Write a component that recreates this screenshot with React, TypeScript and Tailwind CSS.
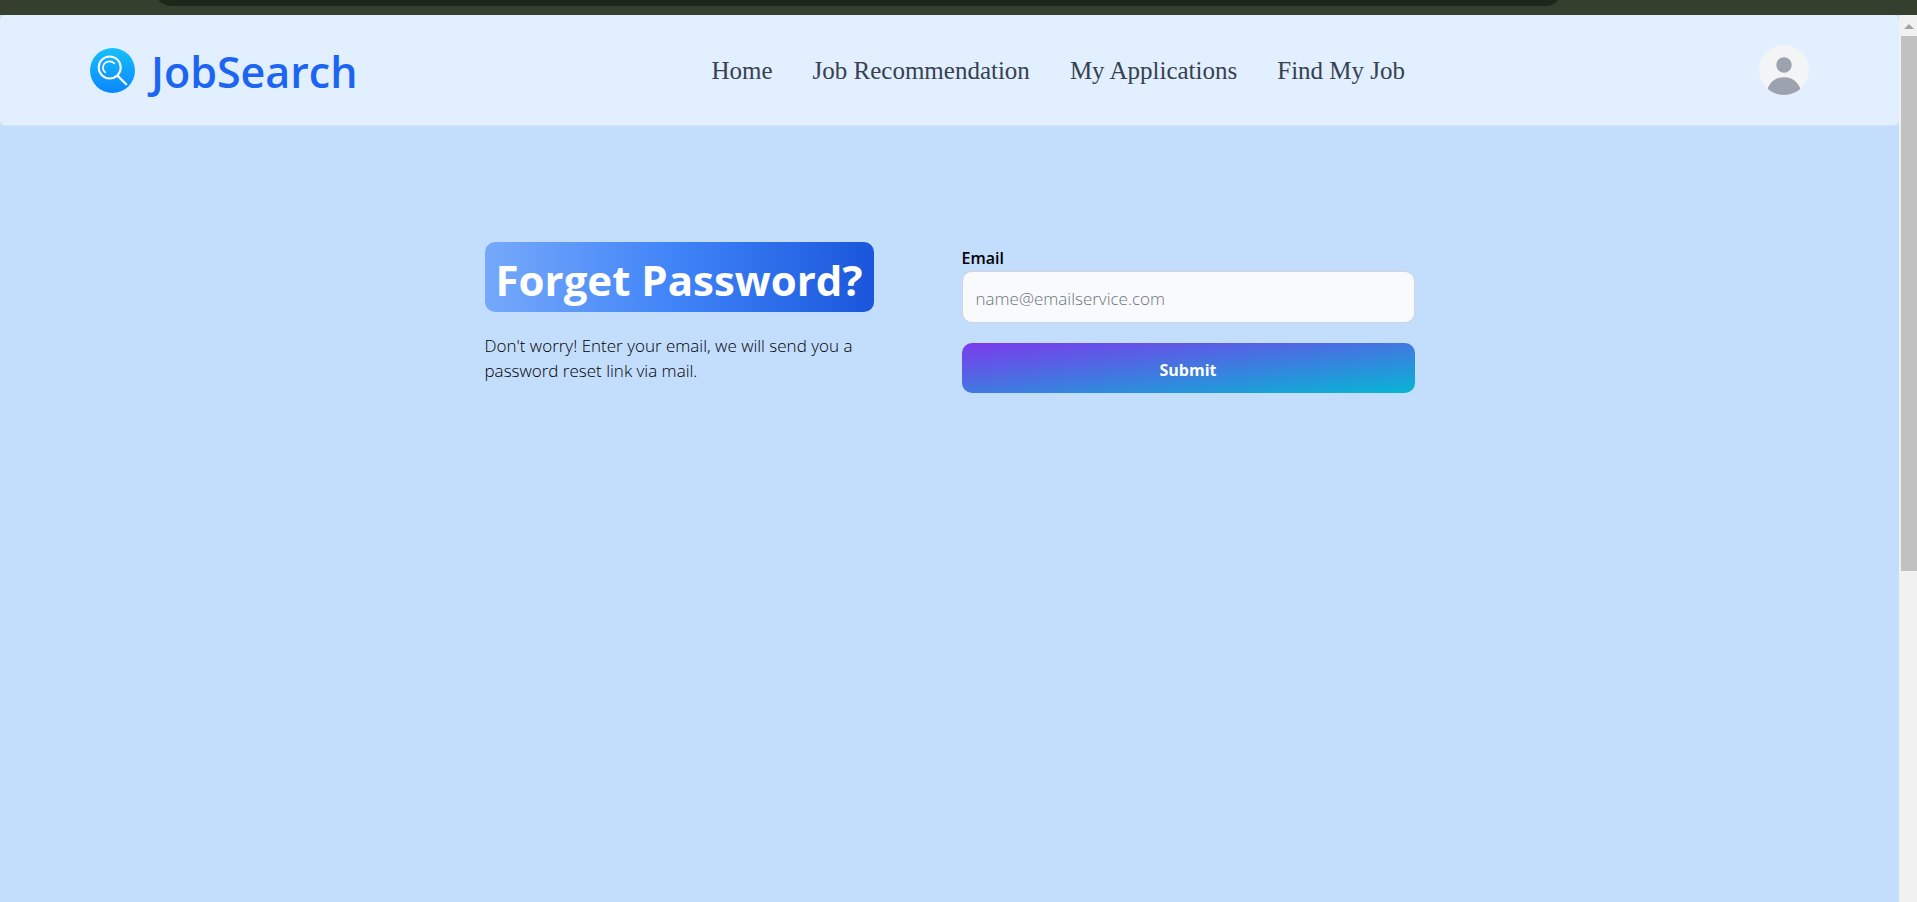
import { useId } from "react";

const links = ["Home", "Job Recommendation", "My Applications", "Find My Job"];

function Logo() {
  const id = useId();
  return (
    <svg viewBox="0 0 45 45" className="size-[45px] shrink-0" aria-hidden="true">
      <defs>
        <linearGradient id={id} x1="0" y1="0" x2="0" y2="1">
          <stop offset="0" stopColor="#16c0fb" />
          <stop offset="1" stopColor="#0a86ff" />
        </linearGradient>
      </defs>
      <circle cx="22.5" cy="22.5" r="22.5" fill={`url(#${id})`} />
      <g fill="none" stroke="#fff" strokeLinecap="round">
        <circle cx="19.7" cy="19.4" r="11" strokeWidth="2" />
        <path d="M27.7 27.9 L36.2 36.2" strokeWidth="2.2" />
        <path d="M24.3 15.4 C20.8 12 13.6 13.2 13 19.2 C12.8 21.6 13.6 23.2 15.3 24.4" strokeWidth="1.7" />
      </g>
    </svg>
  );
}

function Avatar() {
  const id = useId();
  return (
    <svg viewBox="0 0 50 50" className="size-[50px]" aria-hidden="true">
      <clipPath id={id}>
        <circle cx="25" cy="25" r="25" />
      </clipPath>
      <g clipPath={`url(#${id})`}>
        <rect width="50" height="50" fill="#f3f4f6" />
        <circle cx="25" cy="20" r="7.7" fill="#9ca3af" />
        <path d="M7.5 50 C8 39.5 15 32.2 25 32.2 C35 32.2 42 39.5 42.5 50 Z" fill="#9ca3af" />
      </g>
    </svg>
  );
}

export default function App() {
  return (
    <div className="flex h-screen flex-col overflow-hidden bg-[#c3ddfd] font-['Open_Sans','Noto_Sans',sans-serif] text-black">
      <div className="h-[15px] shrink-0 overflow-hidden bg-[#343f2d] pr-[355px] pl-[155px]">
        <div className="-mt-6 h-[30px] rounded-b-[16px] bg-[#1e281a]" />
      </div>
      <div className="flex min-h-0 flex-1">
        <div className="min-w-0 flex-1">
          <header className="flex h-[111px] items-center justify-between rounded-[5px] border-b border-[#dbe5f2] bg-[#e1effe] px-[90px]">
            <a href="#home" className="flex items-center gap-4">
              <Logo />
              <span className="pt-1 text-[43px] leading-[56px] font-semibold text-[#1c64f2]">JobSearch</span>
            </a>
            <nav>
              <ul className="flex gap-10 pt-[2px] font-['Liberation_Serif',serif] text-[25px] leading-8 text-[#374151]">
                {links.map((link) => (
                  <li key={link}>
                    <a href="#nav">{link}</a>
                  </li>
                ))}
              </ul>
            </nav>
            <button type="button" aria-label="Account" className="rounded-full">
              <Avatar />
            </button>
          </header>
          <main className="mx-auto mt-[116px] grid max-w-[930px] grid-cols-[389fr_453fr] gap-[88px]">
            <section>
              <h1 className="flex h-[70px] items-center justify-center rounded-[10px] bg-[linear-gradient(to_right,#76a9fa,#3f83f8,#1a56db)] pt-1 text-[42px] font-bold whitespace-nowrap text-white">
                Forget Password?
              </h1>
              <p className="mt-[21px] text-[17px] leading-[25px] font-light">
                Don't worry! Enter your email, we will send you a password reset link via mail.
              </p>
            </section>
            <form onSubmit={(e) => e.preventDefault()}>
              <label htmlFor="email" className="block pt-1 text-[16px] leading-[25px] font-semibold">
                Email
              </label>
              <input
                id="email"
                type="email"
                placeholder="name@emailservice.com"
                className="block h-[52px] w-full rounded-[10px] border border-[#d1d5db] bg-[#f9fafb] px-[13px] pt-[2px] text-[17px] font-light placeholder:text-[#6b7280]"
              />
              <button
                type="submit"
                className="mt-5 h-[50px] w-full rounded-[10px] bg-[linear-gradient(to_bottom_right,#7c3aed,#06b6d4)] pt-1 text-[16px] font-bold text-white"
              >
                Submit
              </button>
            </form>
          </main>
        </div>
        <div className="flex w-[18px] shrink-0 flex-col bg-[#f1f1f1] pl-[2px]" aria-hidden="true">
          <svg viewBox="0 0 16 21" className="h-[21px] w-4">
            <path d="M8 9 L13 14 H3 Z" fill="#a3a3a3" />
          </svg>
          <div className="h-[535px] bg-[#c1c1c1]" />
        </div>
      </div>
    </div>
  );
}
